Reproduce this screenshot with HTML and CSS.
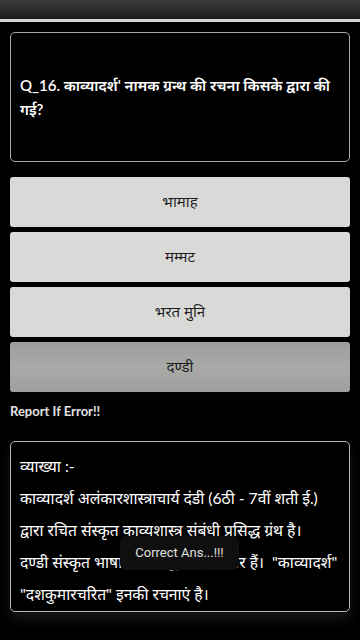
FILE: index.html
```html
<!DOCTYPE html>
<html lang="hi">
<head>
<meta charset="utf-8">
<meta name="viewport" content="width=360, initial-scale=1">
<link rel="stylesheet" href="styles.css">
</head>
<body>
<div class="screen">
  <div class="topbar"></div>
  <div class="topline"></div>
  <main class="content">
    <section class="question-card">
      <p class="question">Q_16. काव्यादर्श' नामक ग्रन्थ की रचना किसके द्वारा की गई?</p>
    </section>
    <div class="options">
      <button class="option">भामाह</button>
      <button class="option">मम्मट</button>
      <button class="option">भरत मुनि</button>
      <button class="option option-correct">दण्डी</button>
    </div>
    <div class="report">Report If Error!!</div>
    <section class="explain-card">
      <p class="explain">व्याख्या :-<br>काव्यादर्श अलंकारशास्त्राचार्य दंडी (6ठी - 7वीं शती ई.)<br>द्वारा रचित संस्कृत काव्यशास्त्र संबंधी प्रसिद्ध ग्रंथ है।<br>दण्डी संस्कृत भाषा के प्रसिद्ध साहित्यकार हैं।&nbsp; "काव्यादर्श"<br>"दशकुमारचरित" इनकी रचनाएं है।</p>
      <div class="toast">Correct Ans...!!!</div>
    </section>
  </main>
</div>
</body>
</html>
```
FILE: styles.css
```css
* { box-sizing: border-box; }
html, body {
  margin: 0;
  padding: 0;
  background: #000;
}
body {
  font-family: Lato, "Noto Sans Devanagari", "Lohit Devanagari", "Noto Sans", sans-serif;
  color: #fff;
  width: 360px;
  height: 640px;
  overflow: hidden;
}
.screen {
  display: flex;
  flex-direction: column;
  height: 640px;
}
.topbar {
  height: 19px;
  background: linear-gradient(#3c3c3c, #1e1e1e);
}
.topline {
  height: 3px;
  background: #d2d4d2;
}
.content {
  display: flex;
  flex-direction: column;
  padding: 10px 10px 0;
}
.question-card {
  height: 130px;
  border: 1.5px solid #a9a9a9;
  border-radius: 5px;
  display: flex;
  align-items: center;
  padding: 0 9px;
}
.question {
  margin: 0;
  font-size: 15px;
  font-weight: 600;
  line-height: 24px;
  color: #fff;
}
.options {
  display: flex;
  flex-direction: column;
  gap: 5px;
  margin-top: 15px;
}
.option {
  height: 50px;
  border: none;
  border-radius: 3px;
  background: #d9dad8;
  color: #1e1e1e;
  font-family: inherit;
  font-size: 15px;
  padding: 0;
}
.option-correct {
  background: linear-gradient(#9d9e9c, #a9aaa8 50%, #9fa09e);
}
.report {
  margin-top: 11px;
  font-size: 13px;
  font-weight: 700;
  color: #e2e2e2;
}
.explain-card {
  position: relative;
  margin-top: 22px;
  height: 171px;
  border: 1.5px solid #b5b5b5;
  border-radius: 5px;
  padding: 8px 9px 0;
  box-shadow: 0 8px 12px rgba(60,60,60,0.35);
}
.explain {
  margin: 0;
  font-size: 15.7px;
  line-height: 32px;
  color: #fff;
  white-space: nowrap;
}
.toast {
  position: absolute;
  left: 109px;
  top: 94px;
  width: 119px;
  height: 34px;
  border-radius: 6px;
  background: #0f0f0f;
  color: #e0e0e0;
  font-family: Roboto, sans-serif;
  font-size: 13px;
  display: flex;
  align-items: center;
  justify-content: center;
  padding-bottom: 2px;
}
```
